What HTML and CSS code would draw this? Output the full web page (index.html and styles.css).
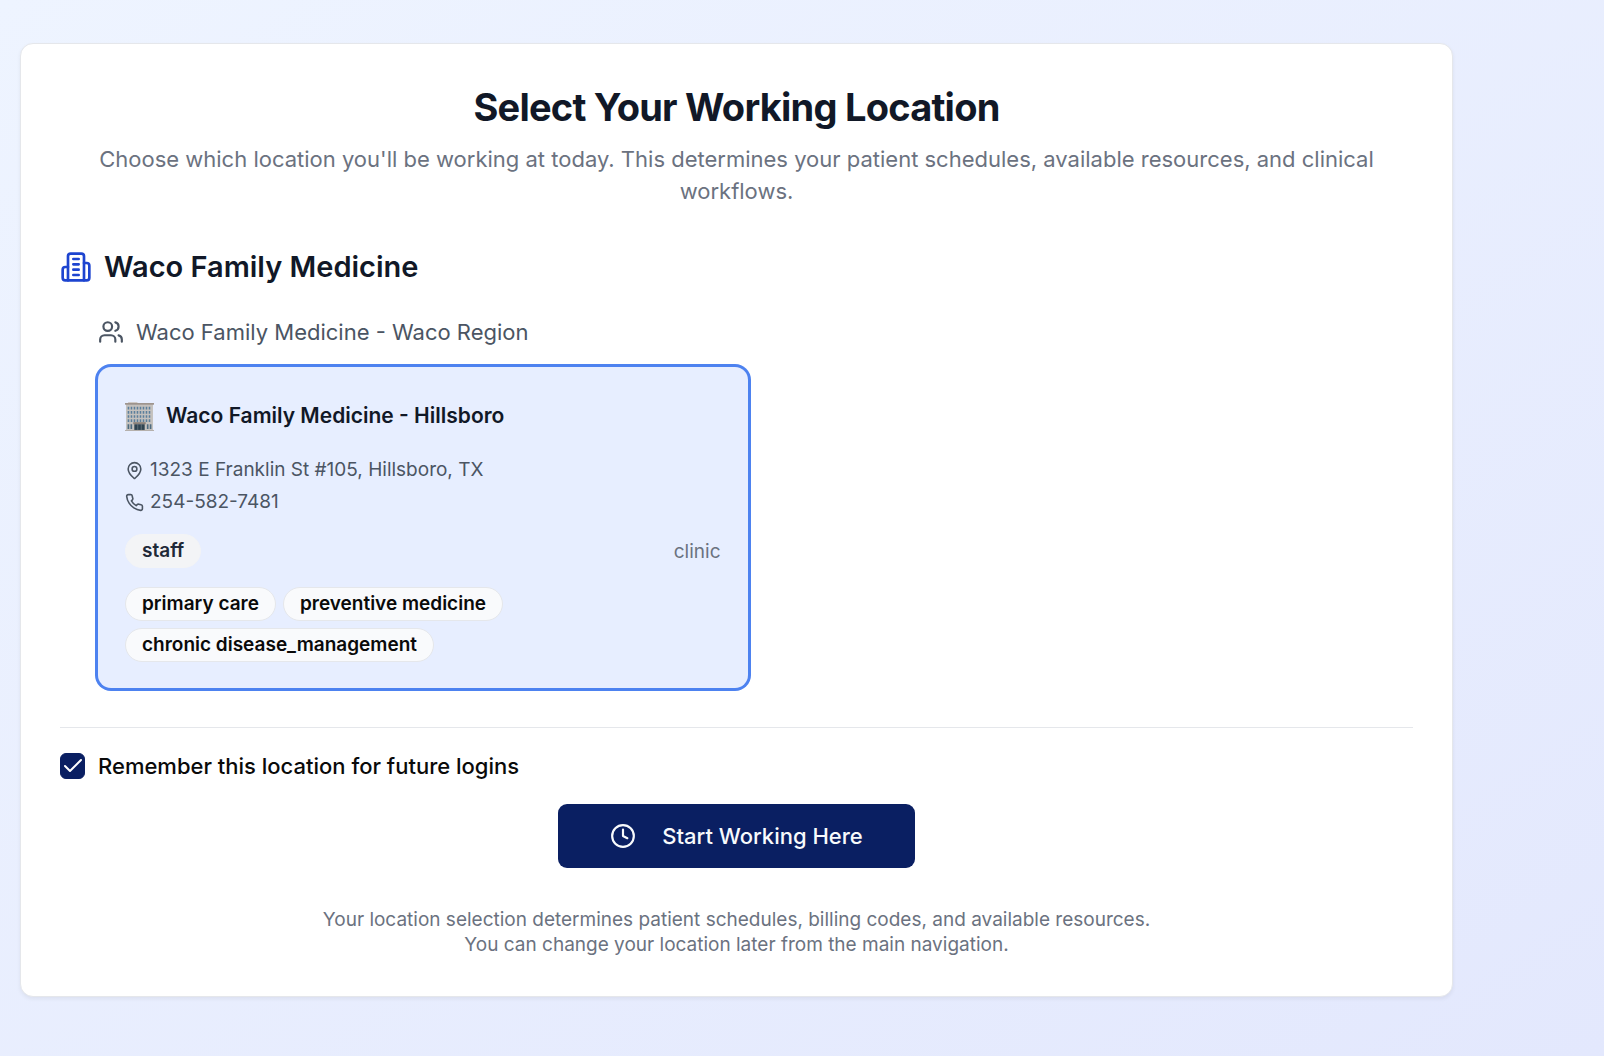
FILE: index.html
```html
<!DOCTYPE html>
<html lang="en">
<head>
<meta charset="utf-8">
<meta name="viewport" content="width=device-width, initial-scale=1">
<title>Select Your Working Location</title>
<link rel="stylesheet" href="styles.css">
</head>
<body>
<main class="card">
  <header class="card-header">
    <h1>Select Your Working Location</h1>
    <p class="subtitle">Choose which location you'll be working at today. This determines your patient schedules, available resources, and clinical workflows.</p>
  </header>

  <section class="organization">
    <h2>
      <svg class="icon icon-lg" viewBox="0 0 24 24" aria-hidden="true"><path d="M6 22V4a2 2 0 0 1 2-2h8a2 2 0 0 1 2 2v18Z"/><path d="M6 12H4a2 2 0 0 0-2 2v6a2 2 0 0 0 2 2h2"/><path d="M18 9h2a2 2 0 0 1 2 2v9a2 2 0 0 1-2 2h-2"/><path d="M10 6h4M10 10h4M10 14h4M10 18h4"/></svg>
      Waco Family Medicine
    </h2>
    <div class="region">
      <h3>
        <svg class="icon icon-md" viewBox="0 0 24 24" aria-hidden="true"><path d="M16 21v-2a4 4 0 0 0-4-4H6a4 4 0 0 0-4 4v2"/><circle cx="9" cy="7" r="4"/><path d="M22 21v-2a4 4 0 0 0-3-3.87"/><path d="M16 3.13a4 4 0 0 1 0 7.75"/></svg>
        Waco Family Medicine - Waco Region
      </h3>
      <div class="locations">
        <button type="button" class="location" aria-pressed="true">
          <span class="location-name">
            <svg class="building" viewBox="0 0 28 28" aria-hidden="true">
              <path fill="#cfcac7" d="M3 0h9v2H3z"/>
              <path fill="#c4c1be" d="M1 2h26v25H1z"/>
              <path fill="#9c918b" d="M0 1h28v1.600H0z"/>
              <path fill="none" stroke="#5b7f9c" stroke-width="2.6" stroke-dasharray="1.5 1.4" d="M2.6 6h23M2.6 10h23M2.6 14h23M2.6 18h23"/>
              <path fill="#4d6b80" d="M2.5 21.5h1.6V26H2.5zM5.3 21.5h1.6V26H5.3zM21.1 21.5h1.6V26h-1.6zM23.9 21.5h1.6V26h-1.6z"/>
              <path fill="#8a8078" d="M8 19.500h12v2H8z"/>
              <path fill="#2f4350" d="M9 21.500h10V27H9z"/>
              <path stroke="#7d8990" stroke-width=".6" d="M12.300 21.500V27M15.700 21.500V27"/>
              <path fill="#b5b0ac" d="M0 27h28v1H0z"/>
            </svg>
            Waco Family Medicine - Hillsboro
          </span>
          <span class="contact">
            <span class="contact-row">
              <svg class="icon icon-sm" viewBox="0 0 24 24" aria-hidden="true"><path d="M20 10c0 4.993-5.539 10.193-7.399 11.799a1 1 0 0 1-1.202 0C9.539 20.193 4 14.993 4 10a8 8 0 0 1 16 0"/><circle cx="12" cy="10" r="3"/></svg>
              1323 E Franklin St #105, Hillsboro, TX
            </span>
            <span class="contact-row">
              <svg class="icon icon-sm" viewBox="0 0 24 24" aria-hidden="true"><path d="M22 16.920v3a2 2 0 0 1-2.180 2 19.790 19.790 0 0 1-8.630-3.070 19.500 19.500 0 0 1-6-6 19.790 19.790 0 0 1-3.070-8.670A2 2 0 0 1 4.110 2h3a2 2 0 0 1 2 1.720 12.840 12.840 0 0 0 .7 2.810 2 2 0 0 1-.45 2.110L8.090 9.910a16 16 0 0 0 6 6l1.270-1.270a2 2 0 0 1 2.110-.45 12.840 12.840 0 0 0 2.810.7A2 2 0 0 1 22 16.920z"/></svg>
              254-582-7481
            </span>
          </span>
          <span class="role-row">
            <span class="badge badge-role">staff</span>
            <span class="kind">clinic</span>
          </span>
          <span class="services">
            <span class="badge">primary care</span>
            <span class="badge">preventive medicine</span>
            <span class="badge">chronic disease_management</span>
          </span>
        </button>
      </div>
    </div>
  </section>

  <footer class="card-footer">
    <div class="remember">
      <span class="checkbox">
        <input type="checkbox" id="remember" checked>
        <svg viewBox="0 0 24 24" aria-hidden="true"><path d="M20 6 9 17l-5-5"/></svg>
      </span>
      <label for="remember">Remember this location for future logins</label>
    </div>
    <button type="button" class="start">
      <svg class="icon icon-md" viewBox="0 0 24 24" aria-hidden="true"><circle cx="12" cy="12" r="10"/><path d="M12 6v6l4 2"/></svg>
      Start Working Here
    </button>
    <p class="note">Your location selection determines patient schedules, billing codes, and available resources.<br>You can change your location later from the main navigation.</p>
  </footer>
</main>
</body>
</html>
```
FILE: styles.css
```css
* {
  box-sizing: border-box;
  margin: 0;
}

body {
  min-height: 100vh;
  padding: 43px 151px 43px 20px;
  background: linear-gradient(to bottom right, #eef4ff, #e3e8fd);
  color: #0a0a0a;
  font-family: Inter, "Liberation Sans", sans-serif;
}

button {
  border: 0;
  font: inherit;
  color: inherit;
}

.card {
  padding: 38px 39px 39px;
  border: 1px solid #e5e7eb;
  border-radius: 13px;
  background: #fff;
  box-shadow: 0 2px 4px rgba(0, 0, 0, 0.06);
}

.card-header {
  color: #111827;
  text-align: center;
}

h1 {
  font-size: 38px;
  font-weight: 700;
  line-height: 50px;
  letter-spacing: -0.02em;
}

.subtitle {
  padding-top: 11px;
  color: #6b7280;
  font-size: 22px;
  line-height: 32px;
}

h2 {
  display: flex;
  align-items: center;
  gap: 12px;
  margin-top: 38px;
  color: #111827;
  font-size: 29px;
  font-weight: 600;
  line-height: 44px;
}

.region {
  padding: 25px 0 0 38px;
}

h3 {
  display: flex;
  align-items: center;
  gap: 12px;
  color: #4b5563;
  font-size: 22px;
  font-weight: 400;
  line-height: 36px;
}

.icon {
  flex: none;
  fill: none;
  stroke: currentColor;
  stroke-width: 2;
  stroke-linecap: round;
  stroke-linejoin: round;
}

.icon-lg {
  width: 32px;
  height: 32px;
  color: #1d44d0;
}

.icon-md {
  width: 26px;
  height: 26px;
}

.icon-sm {
  width: 19px;
  height: 19px;
}

.locations {
  display: grid;
  grid-template-columns: 1fr 1fr;
  gap: 16px;
  padding-top: 17px;
}

.location {
  display: flex;
  flex-direction: column;
  padding: 27px 27px 26px;
  border-radius: 13px;
  background: #e7eeff;
  box-shadow: 0 0 0 3px #4d82f0;
  text-align: left;
}

.location-name {
  display: flex;
  align-items: center;
  gap: 12px;
  color: #111827;
  font-size: 21px;
  font-weight: 600;
  line-height: 44px;
}

.building {
  flex: none;
  width: 29px;
  height: 29px;
}

.contact {
  padding-top: 16px;
  color: #4b5563;
  font-size: 19px;
  line-height: 32px;
}

.contact-row {
  display: flex;
  align-items: center;
  gap: 6px;
}

.role-row {
  display: flex;
  align-items: center;
  justify-content: space-between;
  padding-top: 16px;
}

.badge {
  padding: 3px 16px;
  border: 1px solid #e5e7eb;
  border-radius: 17px;
  background: #f9fafc;
  font-size: 19px;
  font-weight: 600;
  line-height: 26px;
}

.badge-role {
  border-color: #f3f4f6;
  background: #f3f4f6;
  color: #1f2937;
}

.kind {
  color: #6b7280;
  font-size: 19px;
}

.services {
  display: flex;
  flex-wrap: wrap;
  gap: 7px;
  padding-top: 19px;
}

.card-footer {
  display: flex;
  flex-direction: column;
  align-items: center;
  margin-top: 39px;
  padding-top: 25px;
  border-top: 1px solid #e5e7eb;
}

.remember {
  display: flex;
  align-items: center;
  align-self: stretch;
  gap: 13px;
  font-size: 22px;
  font-weight: 500;
  line-height: 26px;
}

.checkbox {
  display: grid;
  place-items: center;
}

.checkbox input {
  grid-area: 1 / 1;
  width: 25px;
  height: 26px;
  border: 1px solid #0a1f62;
  border-radius: 6px;
  background: #fff;
  appearance: none;
}

.checkbox input:checked {
  background: #0a1f62;
}

.checkbox svg {
  grid-area: 1 / 1;
  width: 24px;
  height: 24px;
  fill: none;
  stroke: #fff;
  stroke-width: 2;
  stroke-linecap: round;
  stroke-linejoin: round;
  pointer-events: none;
}

.start {
  display: flex;
  align-items: center;
  gap: 26px;
  margin-top: 25px;
  padding: 16px 52px;
  border-radius: 9px;
  background: #0a1f62;
  color: #f8fafc;
  font-size: 22px;
  font-weight: 500;
  line-height: 32px;
}

.note {
  padding-top: 39px;
  color: #6b7280;
  font-size: 19px;
  line-height: 25px;
  text-align: center;
}
```
